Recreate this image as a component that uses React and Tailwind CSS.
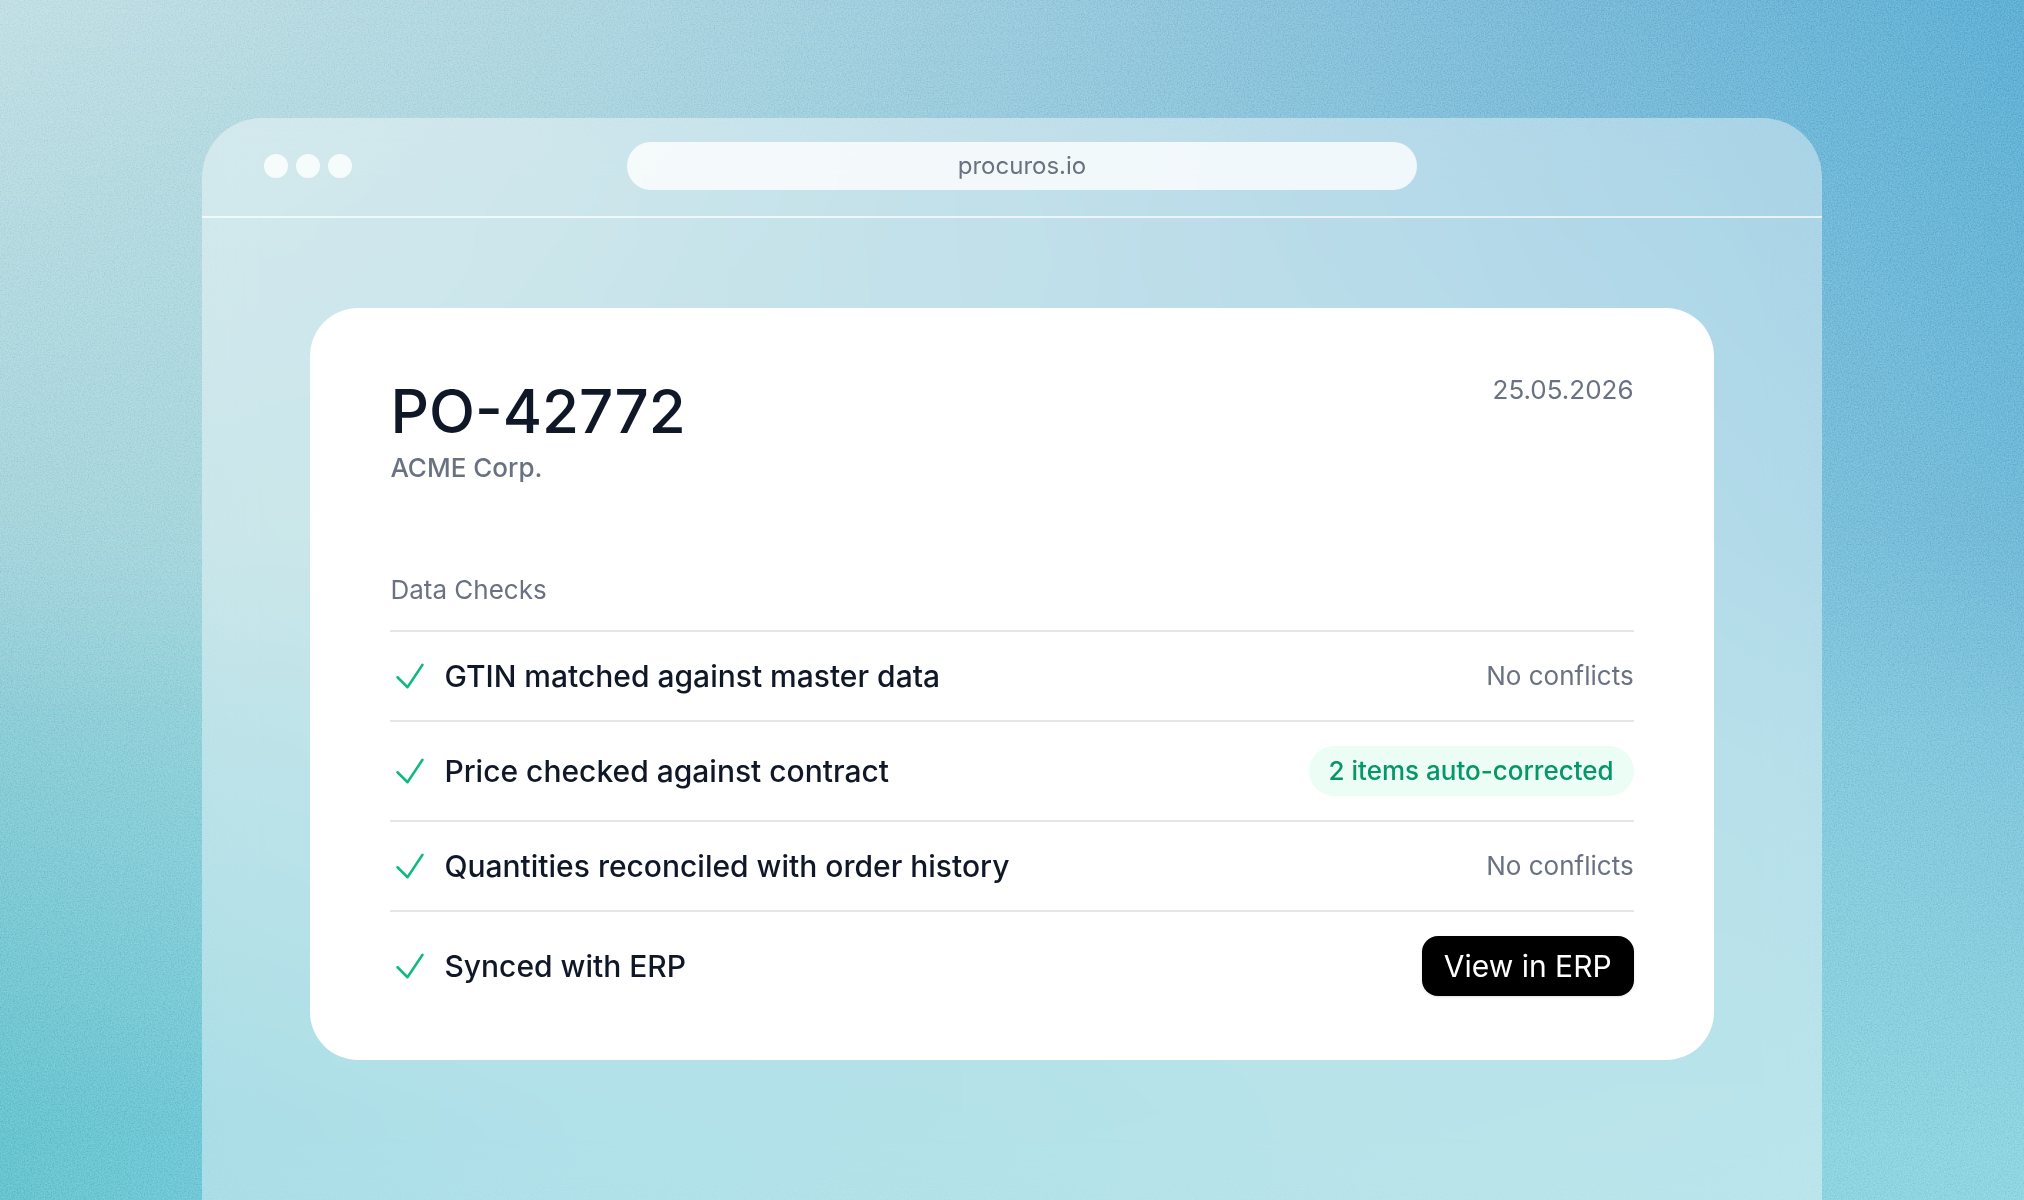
import clsx from "clsx";

const checks = [
  { label: "GTIN matched against master data", result: "No conflicts", type: "text" },
  { label: "Price checked against contract", result: "2 items auto-corrected", type: "badge" },
  { label: "Quantities reconciled with order history", result: "No conflicts", type: "text" },
  { label: "Synced with ERP", result: "View in ERP", type: "button" },
];

const CheckIcon = () => (
  <svg
    className="size-10 shrink-0 text-[#10b981]"
    viewBox="0 0 24 24"
    fill="none"
    stroke="currentColor"
    strokeWidth="1.5"
    strokeLinecap="round"
    strokeLinejoin="round"
    aria-hidden="true"
  >
    <path d="m4.5 12.75 6 6 9-13.5" />
  </svg>
);

// Soft colour field with a fine grain on top
const Backdrop = () => (
  <div className="absolute inset-0 -z-10" aria-hidden="true">
    <div className="absolute inset-0 bg-[linear-gradient(to_right,#68c5d0,#74c9d8_12%,#7ccddb_25%,#82d0da_50%,#8cd3dd_75%,#8fd5e1)]" />
    <div className="absolute inset-0 bg-[linear-gradient(to_right,#9ed1da,#a4d8dd_18%,#93cedc_50%,#8acade_80%,#7abfda)] [mask-image:linear-gradient(to_bottom,black_45%,transparent_95%)]" />
    <div className="absolute inset-0 bg-[linear-gradient(to_right,#c2dfe4,#b0d6e0_28%,#9bcbdd_50%,#7abad8_78%,#60b1d5)] [mask-image:linear-gradient(to_bottom,black,transparent_60%)]" />
    <svg className="absolute inset-0 size-full opacity-30 mix-blend-soft-light">
      <filter id="grain" colorInterpolationFilters="sRGB">
        <feTurbulence type="fractalNoise" baseFrequency="0.7" numOctaves="2" seed="4" />
        <feColorMatrix values="1.6 0 0 0 -0.3  1.6 0 0 0 -0.3  1.6 0 0 0 -0.3  0 0 0 0 1" />
      </filter>
      <rect width="100%" height="100%" filter="url(#grain)" />
    </svg>
  </div>
);

const CheckResult = ({ type, children }) => {
  if (type === "button") {
    return (
      <button className="rounded-2xl bg-black px-[22px] py-[10px] text-[30px] leading-10 text-white shadow-sm">
        {children}
      </button>
    );
  }
  return (
    <span
      className={clsx(
        "text-[26px] leading-9",
        type === "badge"
          ? "rounded-full bg-[#ecfdf5] px-5 py-[7px] font-medium text-[#059669]"
          : "text-gray-500"
      )}
    >
      {children}
    </span>
  );
};

const App = () => {
  return (
    <div className="relative isolate flex min-h-screen flex-col px-[10%] pt-[118px] font-['Inter',sans-serif]">
      <Backdrop />

      <main className="flex-1 rounded-t-[60px] bg-white/40 backdrop-blur-xl">
        {/* Browser bar */}
        <header className="flex items-center border-b-2 border-white/70 pt-6 pr-[130px] pb-[26px] pl-[62px]">
          <div className="flex gap-2">
            <span className="size-6 rounded-full bg-white/80" />
            <span className="size-6 rounded-full bg-white/80" />
            <span className="size-6 rounded-full bg-white/80" />
          </div>
          <div className="flex-1">
            <div className="mx-auto w-[59%] rounded-full bg-white/80 py-2 text-center text-[24px] leading-8 text-gray-500">
              procuros.io
            </div>
          </div>
        </header>

        <section className="mx-[108px] mt-[90px] mb-[108px] rounded-[48px] bg-white px-20 py-16">
          <div className="flex items-start justify-between">
            <div>
              <h1 className="text-[60px] leading-[78px] font-medium text-gray-900">PO-42772</h1>
              <p className="text-[26px] leading-9 font-medium text-gray-500">ACME Corp.</p>
            </div>
            <time className="text-[26px] leading-9 text-gray-500" dateTime="2026-05-25">
              25.05.2026
            </time>
          </div>

          <h2 className="mt-[86px] pb-[22px] text-[26px] leading-9 text-gray-500">Data Checks</h2>
          <ul>
            {checks.map((check) => (
              <li
                key={check.label}
                className="flex items-center justify-between border-t-2 border-neutral-200 py-6 last:pb-0"
              >
                <div className="flex items-center gap-[14px]">
                  <CheckIcon />
                  <span className="text-[30px] leading-10 font-medium text-gray-900">{check.label}</span>
                </div>
                <CheckResult type={check.type}>{check.result}</CheckResult>
              </li>
            ))}
          </ul>
        </section>
      </main>
    </div>
  );
};

export default App;
